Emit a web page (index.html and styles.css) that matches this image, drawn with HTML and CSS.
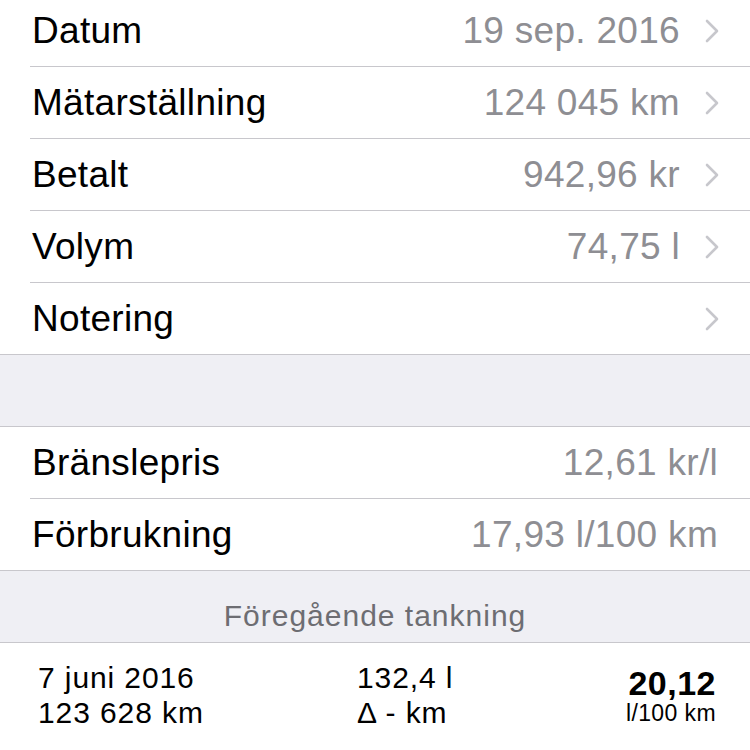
FILE: index.html
```html
<!DOCTYPE html>
<html lang="sv">
<head>
    <meta charset="UTF-8">
    <meta name="viewport" content="width=device-width, initial-scale=1.0">
    <title>Tankning</title>
    <link rel="stylesheet" href="styles.css">
</head>
<body>
    <main class="screen">
        <ul class="group group-first">
            <li class="row">
                <span class="label">Datum</span>
                <span class="value">19 sep. 2016</span>
                <svg class="chevron" width="14" height="24" viewBox="0 0 14 24"><polyline points="2,2 12,12 2,22" /></svg>
            </li>
            <li class="row">
                <span class="label">Mätarställning</span>
                <span class="value">124 045 km</span>
                <svg class="chevron" width="14" height="24" viewBox="0 0 14 24"><polyline points="2,2 12,12 2,22" /></svg>
            </li>
            <li class="row">
                <span class="label">Betalt</span>
                <span class="value">942,96 kr</span>
                <svg class="chevron" width="14" height="24" viewBox="0 0 14 24"><polyline points="2,2 12,12 2,22" /></svg>
            </li>
            <li class="row">
                <span class="label">Volym</span>
                <span class="value">74,75 l</span>
                <svg class="chevron" width="14" height="24" viewBox="0 0 14 24"><polyline points="2,2 12,12 2,22" /></svg>
            </li>
            <li class="row">
                <span class="label">Notering</span>
                <span class="value"></span>
                <svg class="chevron" width="14" height="24" viewBox="0 0 14 24"><polyline points="2,2 12,12 2,22" /></svg>
            </li>
        </ul>

        <div class="spacer"></div>

        <ul class="group group-top">
            <li class="row row-plain">
                <span class="label">Bränslepris</span>
                <span class="value">12,61 kr/l</span>
            </li>
            <li class="row row-plain">
                <span class="label">Förbrukning</span>
                <span class="value">17,93 l/100 km</span>
            </li>
        </ul>

        <div class="section-header">Föregående tankning</div>

        <section class="previous">
            <div class="prev-col">
                <div>7 juni 2016</div>
                <div>123 628 km</div>
            </div>
            <div class="prev-col">
                <div>132,4 l</div>
                <div>Δ - km</div>
            </div>
            <div class="prev-result">
                <div class="result-number">20,12</div>
                <div class="result-unit">l/100 km</div>
            </div>
        </section>
    </main>
</body>
</html>
```

FILE: styles.css
```css
body {
    margin: 0;
    padding: 0;
    background-color: #efeff4;
    font-family: "Liberation Sans", Arial, sans-serif;
    overflow: hidden;
}

.screen {
    width: 750px;
    height: 750px;
    overflow: hidden;
}

.group {
    list-style: none;
    margin: 0;
    padding: 0;
    background-color: #fff;
    border-bottom: 1px solid #c8c7cc;
}

.group-first {
    margin-top: -5px;
}

.group-top {
    border-top: 1px solid #c8c7cc;
}

.row {
    display: flex;
    align-items: center;
    height: 71px;
    margin-left: 30px;
    padding-left: 2px;
    padding-right: 31px;
    border-bottom: 1px solid #c8c7cc;
}

.row:last-child {
    border-bottom: none;
}

.row-plain {
    padding-right: 32px;
}

.label {
    flex: 1;
    font-size: 37px;
    letter-spacing: 0.3px;
    color: #000;
}

.value {
    font-size: 37px;
    letter-spacing: 0.3px;
    color: #8e8e93;
}

.chevron {
    margin-left: 25px;
    fill: none;
    stroke: #c7c7cc;
    stroke-width: 2.6;
    stroke-linecap: round;
    stroke-linejoin: round;
}

.spacer {
    height: 71px;
}

.section-header {
    height: 71px;
    box-sizing: border-box;
    padding-top: 28px;
    font-size: 30px;
    line-height: 34px;
    letter-spacing: 1px;
    text-align: center;
    color: #6d6d72;
}

.previous {
    display: grid;
    grid-template-columns: 319px 1fr auto;
    align-items: start;
    height: 120px;
    padding: 17px 34px 0 38px;
    background-color: #fff;
    border-top: 1px solid #c8c7cc;
}

.prev-col {
    font-size: 30px;
    line-height: 35px;
    letter-spacing: 0.9px;
    color: #000;
}

.prev-result {
    padding-top: 8px;
    text-align: right;
    color: #000;
}

.result-number {
    font-size: 34px;
    font-weight: bold;
    line-height: 30px;
    letter-spacing: 0.5px;
}

.result-unit {
    font-size: 23px;
    line-height: 30px;
    letter-spacing: 0.4px;
}
```
